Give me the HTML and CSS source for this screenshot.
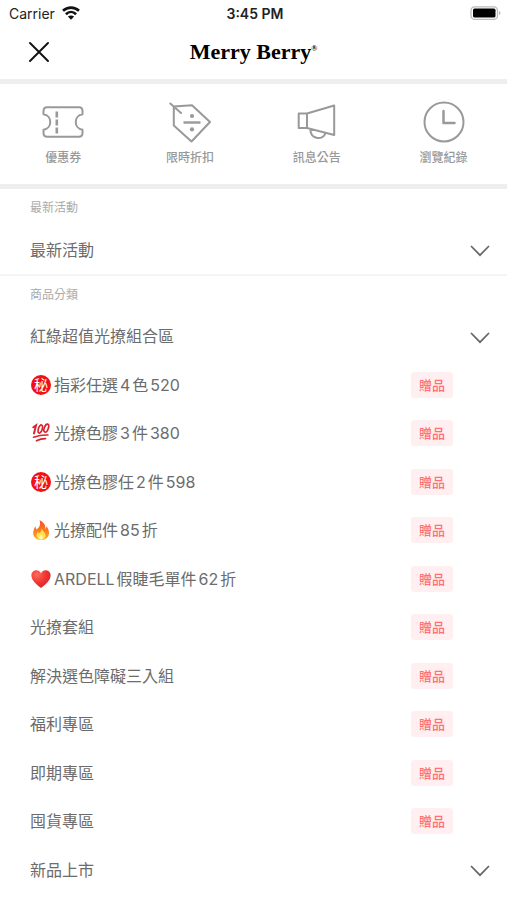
FILE: index.html
```html
<!DOCTYPE html>
<html lang="zh-Hant">
<head>
<meta charset="utf-8">
<meta name="viewport" content="width=device-width, initial-scale=1">
<title>Merry Berry</title>
<link rel="stylesheet" href="styles.css">
</head>
<body>
<svg class="defs" aria-hidden="true">
  <symbol id="chevron" viewBox="0 0 20 12"><path d="M1 1l9 9.200 9-9.200" fill="none" stroke="currentColor" stroke-width="1.700"/></symbol>
</svg>
<div class="status">
  <div class="carrier">
    <span>Carrier</span>
    <svg width="18" height="14" viewBox="0 0 18 14" aria-hidden="true">
      <path d="M1 4.800C5.500.5 12.500.5 17 4.800M3.900 8.200c3-2.900 7.200-2.900 10.200 0" fill="none" stroke="#111" stroke-width="2.600"/>
      <path d="M9 13.800L5.900 10.600c1.800-1.600 4.400-1.600 6.200 0z" fill="#111"/>
    </svg>
  </div>
  <div class="clock">3:45 PM</div>
  <div class="battery">
    <svg width="31" height="14" viewBox="0 0 31 14" aria-hidden="true">
      <rect x="1" y="0.800" width="26.500" height="12.600" rx="3.600" fill="#fff" stroke="#bbb" stroke-width="1.300"/>
      <rect x="3" y="2.600" width="22.500" height="9" rx="1.600" fill="#000"/>
      <path d="M29 5v4.200q1.500-.6 1.500-2.100T29 5z" fill="#bbb"/>
    </svg>
  </div>
</div>
<header class="header">
  <button class="close" type="button" aria-label="關閉">
    <svg width="20" height="20" viewBox="0 0 20 20"><path d="M1 1l18 18M19 1L1 19" fill="none" stroke="#111" stroke-width="1.900" stroke-linecap="round"/></svg>
  </button>
  <h1 class="logo">Merry Berry<sup>®</sup></h1>
</header>
<nav class="shortcuts">
  <a href="#coupon">
    <svg width="42" height="42" viewBox="0 0 42 42"><path d="M5 6.300H37Q40.500 6.300 40.500 10V13.300C31.500 14.500 31.500 27.500 40.500 28.700V32Q40.500 35.700 37 35.700H5Q1.500 35.700 1.500 32V28.700C10.500 27.500 10.500 14.500 1.500 13.300V10Q1.500 6.300 5 6.300Z"/><path d="M14.800 10.500v6M14.800 18.500v6M14.800 26.500v6" stroke-width="2.600"/></svg>
    <span>優惠券</span>
  </a>
  <a href="#sale">
    <svg width="42" height="42" viewBox="0 0 42 42"><path d="M4.800 5.500L23 4.200 41 21 22.500 40.500 4.800 24.500ZM1.300 2.500L12 12"/><path d="M14.500 21.500H31.500" stroke-width="2.400"/><circle cx="23" cy="15" r="2.100"/><circle cx="23" cy="28.400" r="2.100"/></svg>
    <span>限時折扣</span>
  </a>
  <a href="#news">
    <svg width="42" height="42" viewBox="0 0 42 42"><path d="M2.700 12.500H11V27H2.700ZM11 12.500L38.200 4.500V34L11 27M14.300 28C14.500 39 27.500 39.500 29.500 32"/></svg>
    <span>訊息公告</span>
  </a>
  <a href="#history">
    <svg width="42" height="42" viewBox="0 0 42 42"><circle class="ring" cx="21" cy="21" r="19.500"/><path d="M20.500 10v12H31.500" stroke-width="2.500"/></svg>
    <span>瀏覽紀錄</span>
  </a>
</nav>
<main class="menu">
  <section class="events">
    <h2>最新活動</h2>
    <button class="row" type="button" aria-expanded="false"><span>最新活動</span><svg class="chevron"><use href="#chevron"/></svg></button>
  </section>
  <section class="categories">
    <h2>商品分類</h2>
    <div class="list">
      <button class="row" type="button" aria-expanded="false"><span>紅綠超值光撩組合區</span><svg class="chevron"><use href="#chevron"/></svg></button>
      <a class="row" href="#c1"><span class="secret">秘</span><span>指彩任選4色520</span><span class="badge">贈品</span></a>
      <a class="row" href="#c2"><svg class="emoji" viewBox="0 0 20 20" aria-hidden="true"><g fill="none" stroke="#d9232e" stroke-linecap="round"><path d="M2.300 4.300L5 2.400 3 10.500" stroke-width="2"/><ellipse cx="9.300" cy="6" rx="1.900" ry="4.200" transform="rotate(17 9.300 6)" stroke-width="1.700"/><ellipse cx="15.300" cy="5.100" rx="2" ry="4.200" transform="rotate(20 15.300 5.100)" stroke-width="1.700"/><path d="M2.500 14.300Q10 11.600 17 12M5.500 17.800Q10 15.500 14.500 15.600" stroke-width="1.600"/></g></svg><span>光撩色膠3件380</span><span class="badge">贈品</span></a>
      <a class="row" href="#c3"><span class="secret">秘</span><span>光撩色膠任2件598</span><span class="badge">贈品</span></a>
      <a class="row" href="#c4"><svg class="emoji" viewBox="0 0 20 20" aria-hidden="true"><defs><linearGradient id="fire" x2="0" y2="1"><stop stop-color="#f3502b"/><stop offset="0.500" stop-color="#fb7b22"/><stop offset="1" stop-color="#ffac2d"/></linearGradient></defs><path d="M8.500.2C13 2.300 14.800 5.500 14.300 9c1-.8 1.200-2 1-3 2.800 3.500 3.500 7 2 10-1.300 2.600-4 4-7.200 4-4.500 0-7.900-2.700-7.900-7 0-3 1.400-4.800 2-6.500.8.800 1.100 2 1.100 3C8.800 7.500 9.900 4 8.500.2z" fill="url(#fire)"/><path d="M10.700 8.300c.3 2.700 3.900 4.200 3.900 7.300 0 2.500-1.800 4.100-4.400 4.100s-4.600-1.500-4.600-4.200c0-1.800.8-2.800 1.300-3.700.5.500.7 1.100.8 1.700 1.800-1.200 3-2.800 3-5.200z" fill="#ffe14a"/><path d="M10.500 14c0 1.400 1.500 2 1.500 3.500 0 1.300-.8 2.100-2 2.100s-2-.8-2-2.100c0-1.500 1.700-1.900 2.500-3.500z" fill="#fff6b0"/></svg><span>光撩配件85折</span><span class="badge">贈品</span></a>
      <a class="row" href="#c5"><svg class="emoji" viewBox="0 0 20 20" aria-hidden="true"><defs><radialGradient id="heart" cx="0.300" cy="0.250" r="0.800"><stop stop-color="#ff6a5c"/><stop offset="0.500" stop-color="#f23b35"/><stop offset="1" stop-color="#d9202a"/></radialGradient></defs><path d="M10 19C6 16 .4 11.500.4 6.500.4 3.400 2.600 1.300 5.300 1.300c2 0 3.800 1.200 4.700 3.100.9-1.900 2.700-3.100 4.700-3.100 2.700 0 4.900 2.100 4.900 5.200C19.600 11.500 14 16 10 19z" fill="url(#heart)"/></svg><span>ARDELL假睫毛單件62折</span><span class="badge">贈品</span></a>
      <a class="row" href="#c6"><span>光撩套組</span><span class="badge">贈品</span></a>
      <a class="row" href="#c7"><span>解決選色障礙三入組</span><span class="badge">贈品</span></a>
      <a class="row" href="#c8"><span>福利專區</span><span class="badge">贈品</span></a>
      <a class="row" href="#c9"><span>即期專區</span><span class="badge">贈品</span></a>
      <a class="row" href="#c10"><span>囤貨專區</span><span class="badge">贈品</span></a>
      <button class="row" type="button" aria-expanded="false"><span>新品上市</span><svg class="chevron"><use href="#chevron"/></svg></button>
    </div>
  </section>
</main>
</body>
</html>
```
FILE: styles.css
```css
* {
  box-sizing: border-box;
}

body {
  margin: 0;
  min-height: 100vh;
  padding-bottom: 6px;
  display: flex;
  flex-direction: column;
  background: #fff;
  color: #6c6c6c;
  font-family: Inter, "Noto Sans CJK TC", sans-serif;
  font-size: 16px;
  text-autospace: normal;
}

button {
  border: 0;
  background: none;
  color: inherit;
  font: inherit;
  text-align: left;
}

a {
  color: inherit;
  text-decoration: none;
}

.defs {
  display: none;
}

.status {
  display: grid;
  grid-template-columns: 1fr auto 1fr;
  align-items: center;
  height: 26px;
  padding: 0 6px 0 9px;
  color: #222;
  font-size: 14px;
}

.carrier {
  display: flex;
  align-items: center;
  gap: 7px;
}

.clock {
  font-weight: 600;
}

.battery {
  display: flex;
  justify-content: flex-end;
}

.header {
  display: grid;
  grid-template-columns: 48px 1fr 48px;
  align-items: start;
  height: 58px;
  padding: 2px 15px 0;
  border-bottom: 5px solid #eee;
}

.close {
  display: grid;
  place-items: center;
  height: 48px;
  padding: 0;
}

.logo {
  margin: 0;
  color: #000;
  font: 700 22px/48px "Liberation Serif", serif;
  text-align: center;
}

.logo sup {
  font-size: 8px;
  line-height: 8px;
  vertical-align: 8px;
}

.shortcuts {
  display: grid;
  grid-template-columns: repeat(4, 1fr);
  height: 105px;
  padding-top: 17px;
  border-bottom: 5px solid #eee;
  color: #999;
  font-size: 12px;
  font-weight: 500;
  line-height: 18px;
}

.shortcuts a {
  display: flex;
  flex-direction: column;
  align-items: center;
  gap: 6px;
}

.shortcuts svg {
  fill: none;
  stroke: #999;
  stroke-width: 2;
  stroke-linejoin: round;
  stroke-linecap: round;
}

.shortcuts svg path:nth-of-type(2) {
  stroke-linecap: butt;
}

.shortcuts circle:not(.ring) {
  fill: #999;
  stroke: none;
}

.menu,
.categories {
  flex: 1;
  display: flex;
  flex-direction: column;
}

.events {
  border-bottom: 2px solid #f5f5f5;
}

h2 {
  margin: 0;
  padding: 10px 30px 0;
  color: #aaa;
  font-size: 12px;
  font-weight: 400;
  line-height: 18px;
}

.categories h2 {
  padding-bottom: 8px;
}

.list {
  flex: 1;
  display: grid;
  grid-auto-rows: 1fr;
}

.row {
  display: flex;
  align-items: center;
  width: 100%;
  min-height: 48px;
  padding: 0 17px 0 30px;
  line-height: 24px;
}

.events .row {
  padding-top: 8px;
  min-height: 57px;
}

.chevron {
  width: 20px;
  height: 12px;
  margin-top: 3px;
  margin-left: auto;
  color: #666;
}

.emoji,
.secret {
  width: 20px;
  height: 20px;
  margin: 0 3px 0 1px;
}

.secret {
  border-radius: 50%;
  background: #f01015;
  color: #fff;
  font-size: 14px;
  line-height: 20px;
  text-align: center;
}

.badge {
  margin-left: auto;
  margin-right: 37px;
  padding: 0 8px;
  border-radius: 3px;
  background: #ffeff0;
  color: #ff7075;
  font-size: 13px;
  font-weight: 500;
  line-height: 26px;
}
```
